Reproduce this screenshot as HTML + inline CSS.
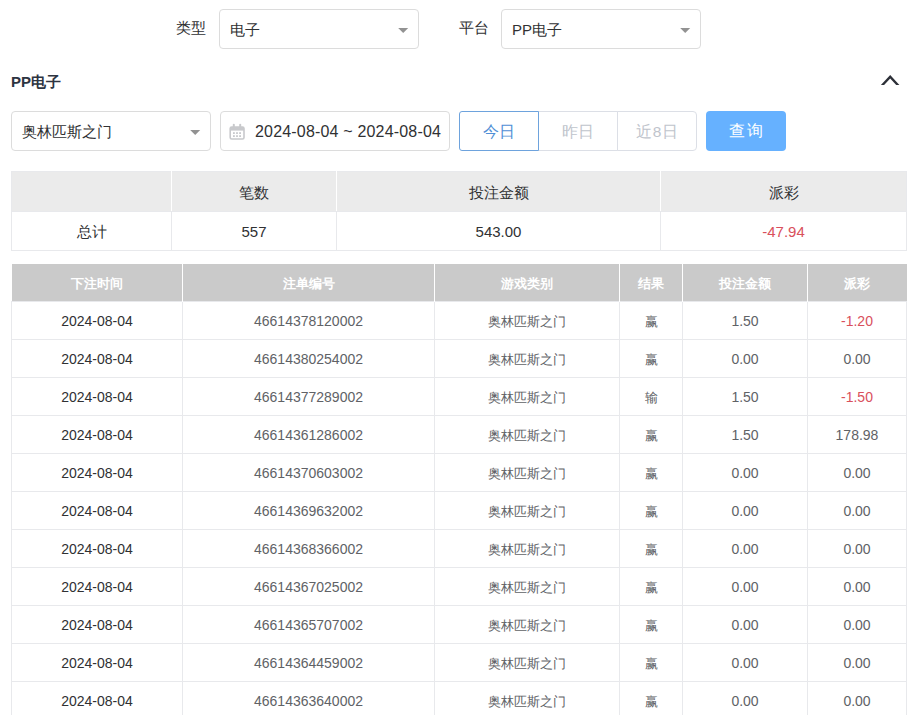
<!DOCTYPE html>
<html><head><meta charset="utf-8">
<style>
*{box-sizing:border-box;margin:0;padding:0}
html,body{width:911px;height:715px;overflow:hidden;background:#fff}
body{font-family:"Liberation Sans",sans-serif;font-size:14px;color:#303133;position:relative}
.abs{position:absolute}
.lbl{position:absolute;font-size:15px;color:#303133;line-height:15px}
.sel{position:absolute;height:40px;border:1px solid #dcdcdc;border-radius:4px;background:#fff}
.sel .t{position:absolute;left:10px;top:0;line-height:39px;font-size:15px;color:#303133}
.arr{position:absolute;width:12px;height:7px}
.h{position:absolute;left:11px;top:73px;font-weight:bold;font-size:15px;color:#2d3441;line-height:17px}
.btn{position:absolute;top:111px;height:40px;width:80px;border:1px solid #dcdfe6;background:#fff;text-align:center;line-height:40px;font-size:15.5px;letter-spacing:0.6px;text-indent:0.6px;color:#c0c4cc}
.q{position:absolute;top:111px;left:706px;width:80px;height:40px;border-radius:4px;background:#66b1ff;color:#fff;text-align:center;line-height:40px;font-size:15.5px;letter-spacing:1.5px;text-indent:1.5px}
table{border-collapse:collapse;position:absolute;table-layout:fixed}
.sum{left:11px;top:171px;width:895px}
.sum td{border:1px solid #e8e9ec;text-align:center;color:#303133;font-size:15px}
.sum tr.hd td{background:#ebebeb;height:40px;padding-top:4px;border-right-color:#fff}
.sum tr.hd td:last-child{border-right-color:#e8e9ec}
.sum tr.bd td{height:39px}
.det{left:11px;top:264px;width:895px}
.det th{background:#cacaca;color:#fff;font-weight:bold;height:37px;border-right:1px solid #fff;font-size:13px;padding-top:4px}
.det th:last-child{border-right:none}
.det td{border:1px solid #e8e9ec;height:38px;text-align:center;font-size:14px;color:#606266;padding-top:2px}
.det td.c{font-size:13px;padding-top:4px}
.det td.d{color:#303133}
.red{color:#d9505c!important}
</style></head><body>
<div class="lbl" style="left:176px;top:20px">类型</div>
<div class="sel" style="left:219px;top:9px;width:200px"><span class="t">电子</span><svg class="arr" style="left:177px;top:16.6px" viewBox="0 0 12 7"><path d="M1.2 1 L11.2 1 L6.2 6 Z" fill="#929292"/></svg></div>
<div class="lbl" style="left:459px;top:20px">平台</div>
<div class="sel" style="left:501px;top:9px;width:200px"><span class="t">PP电子</span><svg class="arr" style="left:177px;top:16.6px" viewBox="0 0 12 7"><path d="M1.2 1 L11.2 1 L6.2 6 Z" fill="#929292"/></svg></div>

<div class="h">PP电子</div>
<svg class="abs" style="left:880px;top:73px" width="20" height="14" viewBox="0 0 20 14"><path d="M0.9 11.9 L10.2 2.1 L19.4 11.9 L16.2 11.9 L10.2 5.6 L4.1 11.9 Z" fill="#2d3038"/></svg>

<div class="sel" style="left:11px;top:111px;width:200px"><span class="t">奥林匹斯之门</span><svg class="arr" style="left:177px;top:16.6px" viewBox="0 0 12 7"><path d="M1.2 1 L11.2 1 L6.2 6 Z" fill="#929292"/></svg></div>
<div class="sel" style="left:220px;top:111px;width:230px">
<svg class="abs" style="left:8px;top:11px" width="16" height="17" viewBox="0 0 16 17"><rect x="1.2" y="4" width="13.8" height="12" rx="1.5" fill="none" stroke="#c8c9cc" stroke-width="1.6"/><rect x="1.2" y="4" width="13.8" height="3.6" fill="#c8c9cc"/><rect x="3.8" y="0.8" width="2" height="5" rx="1" fill="#c8c9cc"/><rect x="10.2" y="0.8" width="2" height="5" rx="1" fill="#c8c9cc"/><g fill="#c8c9cc"><rect x="4" y="9.2" width="1.8" height="1.8"/><rect x="7.1" y="9.2" width="1.8" height="1.8"/><rect x="10.2" y="9.2" width="1.8" height="1.8"/><rect x="4" y="12.2" width="1.8" height="1.8"/><rect x="7.1" y="12.2" width="1.8" height="1.8"/><rect x="10.2" y="12.2" width="1.8" height="1.8"/></g></svg>
<span class="t" style="left:34px;font-size:16px;letter-spacing:0.18px">2024-08-04 ~ 2024-08-04</span></div>

<div class="btn" style="left:459px;border-color:#6ea3dd;color:#4f8fd6;border-radius:3px 0 0 3px;z-index:2">今日</div>
<div class="btn" style="left:538px;width:80px">昨日</div>
<div class="btn" style="left:617px;width:80px;border-radius:0 4px 4px 0">近8日</div>
<div class="q">查询</div>

<table class="sum">
<colgroup><col style="width:160px"><col style="width:165px"><col style="width:324px"><col style="width:246px"></colgroup>
<tr class="hd"><td></td><td>笔数</td><td>投注金额</td><td>派彩</td></tr>
<tr class="bd"><td style="padding-top:2px">总计</td><td>557</td><td>543.00</td><td class="red">-47.94</td></tr>
</table>

<table class="det">
<colgroup><col style="width:171px"><col style="width:252px"><col style="width:185px"><col style="width:63px"><col style="width:125px"><col style="width:99px"></colgroup>
<tr><th>下注时间</th><th>注单编号</th><th>游戏类别</th><th>结果</th><th>投注金额</th><th>派彩</th></tr>
<tr><td class="d">2024-08-04</td><td>46614378120002</td><td class="c">奥林匹斯之门</td><td class="c">赢</td><td>1.50</td><td class="red">-1.20</td></tr>
<tr><td class="d">2024-08-04</td><td>46614380254002</td><td class="c">奥林匹斯之门</td><td class="c">赢</td><td>0.00</td><td>0.00</td></tr>
<tr><td class="d">2024-08-04</td><td>46614377289002</td><td class="c">奥林匹斯之门</td><td class="c">输</td><td>1.50</td><td class="red">-1.50</td></tr>
<tr><td class="d">2024-08-04</td><td>46614361286002</td><td class="c">奥林匹斯之门</td><td class="c">赢</td><td>1.50</td><td>178.98</td></tr>
<tr><td class="d">2024-08-04</td><td>46614370603002</td><td class="c">奥林匹斯之门</td><td class="c">赢</td><td>0.00</td><td>0.00</td></tr>
<tr><td class="d">2024-08-04</td><td>46614369632002</td><td class="c">奥林匹斯之门</td><td class="c">赢</td><td>0.00</td><td>0.00</td></tr>
<tr><td class="d">2024-08-04</td><td>46614368366002</td><td class="c">奥林匹斯之门</td><td class="c">赢</td><td>0.00</td><td>0.00</td></tr>
<tr><td class="d">2024-08-04</td><td>46614367025002</td><td class="c">奥林匹斯之门</td><td class="c">赢</td><td>0.00</td><td>0.00</td></tr>
<tr><td class="d">2024-08-04</td><td>46614365707002</td><td class="c">奥林匹斯之门</td><td class="c">赢</td><td>0.00</td><td>0.00</td></tr>
<tr><td class="d">2024-08-04</td><td>46614364459002</td><td class="c">奥林匹斯之门</td><td class="c">赢</td><td>0.00</td><td>0.00</td></tr>
<tr><td class="d">2024-08-04</td><td>46614363640002</td><td class="c">奥林匹斯之门</td><td class="c">赢</td><td>0.00</td><td>0.00</td></tr>
<tr><td class="d">2024-08-04</td><td>46614362000002</td><td class="c">奥林匹斯之门</td><td class="c">赢</td><td>0.00</td><td>0.00</td></tr>
</table>
</body></html>
